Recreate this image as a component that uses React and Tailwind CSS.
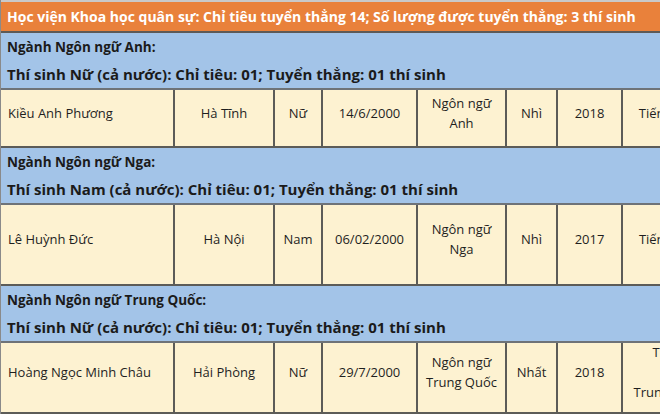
const cols = [
  "w-[174px] justify-start pl-[7px]",
  "w-[100px] justify-center",
  "w-[48px] justify-center",
  "w-[95px] justify-center",
  "w-[89px] justify-center",
  "w-[51px] justify-center",
  "w-[65px] justify-center",
  "w-[94px] justify-center",
];

const sections = [
  {
    major: "Ngành Ngôn ngữ Anh:",
    quota: "Thí sinh Nữ (cả nước): Chỉ tiêu: 01; Tuyển thẳng: 01 thí sinh",
    rowH: "h-[58px]",
    cells: [
      ["Kiều Anh Phương"],
      ["Hà Tĩnh"],
      ["Nữ"],
      ["14/6/2000"],
      ["Ngôn ngữ", "Anh"],
      ["Nhì"],
      ["2018"],
      ["Tiếng Anh"],
    ],
  },
  {
    major: "Ngành Ngôn ngữ Nga:",
    quota: "Thí sinh Nam (cả nước): Chỉ tiêu: 01; Tuyển thẳng: 01 thí sinh",
    rowH: "h-[81px]",
    cells: [
      ["Lê Huỳnh Đức"],
      ["Hà Nội"],
      ["Nam"],
      ["06/02/2000"],
      ["Ngôn ngữ", "Nga"],
      ["Nhì"],
      ["2017"],
      ["Tiếng Nga"],
    ],
  },
  {
    major: "Ngành Ngôn ngữ Trung Quốc:",
    quota: "Thí sinh Nữ (cả nước): Chỉ tiêu: 01; Tuyển thẳng: 01 thí sinh",
    rowH: "h-[71px]",
    cells: [
      ["Hoàng Ngọc Minh Châu"],
      ["Hải Phòng"],
      ["Nữ"],
      ["29/7/2000"],
      ["Ngôn ngữ", "Trung Quốc"],
      ["Nhất"],
      ["2018"],
      ["Tiếng", "\u00a0", "Trung Quốc"],
    ],
  },
];

const Section = ({ data }) => {
  return (
    <>
      <div className="h-[57px] bg-[#a3c4e8] border-b-2 border-[#6e7378] pt-[1px] pl-[6px] font-bold text-[#1b1b1b]">
        <div className="text-[13.5px] leading-[27px] whitespace-nowrap">{data.major}</div>
        <div className="text-[15px] leading-[27px] whitespace-nowrap">{data.quota}</div>
      </div>
      <div className={`${data.rowH} flex bg-[#fdf2d1] border-b-2 border-[#5c5c58]`}>
        {data.cells.map((lines, i) => (
          <div
            key={i}
            className={`${cols[i]} shrink-0 h-full flex items-center pb-[11px] border-r-2 border-[#5c5c58]`}
          >
            <div
              className={`text-[13px] font-medium leading-[20px] text-[#1f1f1f] whitespace-nowrap ${
                i === 0 ? "text-left" : "text-center"
              }`}
            >
              {lines.map((l, j) => (
                <div key={j}>{l}</div>
              ))}
            </div>
          </div>
        ))}
      </div>
    </>
  );
};

export default function App() {
  return (
    <div className="w-[660px] h-[414px] overflow-hidden bg-[#e6e6e6] font-['Open_Sans',sans-serif]">
      <div className="w-[760px] border-l border-[#8a8a8a]">
        <div className="h-[33px] bg-[#e9813b] border-t-2 border-[#c9c9c9] border-b-2 border-b-[#5e5a56] flex items-center pl-[6px]">
          <span className="text-white font-bold text-[14px] whitespace-nowrap">
            Học viện Khoa học quân sự: Chỉ tiêu tuyển thẳng 14; Số lượng được tuyển thẳng: 3 thí sinh
          </span>
        </div>
        {sections.map((s, i) => (
          <Section key={i} data={s} />
        ))}
      </div>
    </div>
  );
}
